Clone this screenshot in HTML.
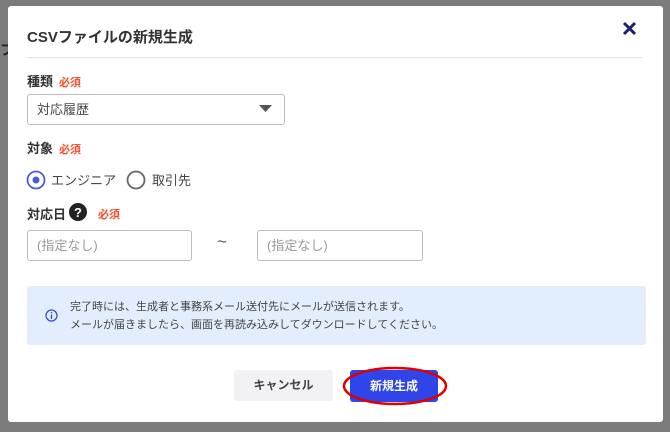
<!DOCTYPE html><html><head><meta charset="utf-8"><style>
*{margin:0;padding:0;box-sizing:border-box}
body{width:670px;height:432px;background:#7b7b7b;position:relative;overflow:hidden;font-family:"Liberation Sans","Noto Sans CJK JP",sans-serif;color:#333}
.m{position:absolute;left:8px;top:6px;width:655px;height:416px;background:#fff;border-radius:3px}
.a{position:absolute}
.lbl{font-size:13px;font-weight:bold;color:#333}
.req{color:#f0522d;font-size:11px;font-weight:bold;margin-left:6px}
.inp{position:absolute;border:1px solid #bdbdbd;border-radius:3px;background:#fff;font-size:13px;color:#999;padding-left:9px;line-height:29px}
</style></head><body>
<div class="a" style="left:0;top:40px;width:8px;height:20px;color:#223;font-weight:bold;font-size:14px;overflow:hidden">フ</div>
<div class="m"></div>
<div class="a" style="left:27px;top:26px;font-size:15px;font-weight:bold;color:#333">CSVファイルの新規生成</div>
<svg class="a" style="left:622px;top:21px" width="15" height="15"><path d="M2 2L13 13M13 2L2 13" stroke="#1d2070" stroke-width="3"/></svg>
<div class="a" style="left:27px;top:57px;width:616px;height:1px;background:#e5e5e5"></div>
<div class="a lbl" style="left:27px;top:71px">種類<span class="req">必須</span></div>
<div class="inp" style="left:27px;top:94px;width:258px;height:31px;color:#444">対応履歴</div>
<svg class="a" style="left:259px;top:105px" width="13" height="8"><path d="M0 0H13L6.5 7Z" fill="#555"/></svg>
<div class="a lbl" style="left:27px;top:138px">対象<span class="req">必須</span></div>
<svg class="a" style="left:26px;top:170px" width="20" height="20"><circle cx="10" cy="10" r="8.5" fill="none" stroke="#4a5ae0" stroke-width="1.8"/><circle cx="10" cy="10" r="3.5" fill="#4a5ae0"/></svg>
<div class="a" style="left:51px;top:170px;font-size:13px;color:#444">エンジニア</div>
<svg class="a" style="left:126px;top:170px" width="20" height="20"><circle cx="10" cy="10" r="8.5" fill="none" stroke="#666" stroke-width="1.8"/></svg>
<div class="a" style="left:152px;top:170px;font-size:13px;color:#444">取引先</div>
<div class="a lbl" style="left:27px;top:204px">対応日</div>
<svg class="a" style="left:69px;top:203px" width="18" height="18"><circle cx="9" cy="9" r="9" fill="#222"/><text x="9" y="14" font-size="13" font-weight="bold" fill="#fff" text-anchor="middle" font-family="Liberation Sans">?</text></svg>
<div class="a req" style="left:92px;top:206px">必須</div>
<div class="inp" style="left:27px;top:230px;width:165px;height:31px">(指定なし)</div>
<div class="a" style="left:217px;top:232px;font-size:17px;color:#555">~</div>
<div class="inp" style="left:257px;top:230px;width:166px;height:31px">(指定なし)</div>
<div class="a" style="left:27px;top:286px;width:619px;height:59px;background:#e2eefd;border-radius:3px"></div>
<svg class="a" style="left:45px;top:309px" width="13" height="13"><circle cx="6.5" cy="6.5" r="5.5" fill="none" stroke="#3b4fd8" stroke-width="1.3"/><path d="M6.5 5.5V10M6.5 3v1.3" stroke="#3b4fd8" stroke-width="1.4"/></svg>
<div class="a" style="left:70px;top:298px;font-size:11px;line-height:18px;color:#444">完了時には、生成者と事務系メール送付先にメールが送信されます。<br>メールが届きましたら、画面を再読み込みしてダウンロードしてください。</div>
<div class="a" style="left:234px;top:370px;width:99px;height:31px;background:#f2f2f4;border-radius:3px;font-size:12px;font-weight:bold;color:#444;text-align:center;line-height:31px">キャンセル</div>
<div class="a" style="left:350px;top:370px;width:88px;height:32px;background:#2f45ea;border-radius:3px;font-size:12px;font-weight:bold;color:#fff;text-align:center;line-height:32px">新規生成</div>
<svg class="a" style="left:340px;top:364px" width="110" height="44"><ellipse cx="55" cy="22" rx="51" ry="18" fill="none" stroke="#e00000" stroke-width="2.5"/></svg>
</body></html>
